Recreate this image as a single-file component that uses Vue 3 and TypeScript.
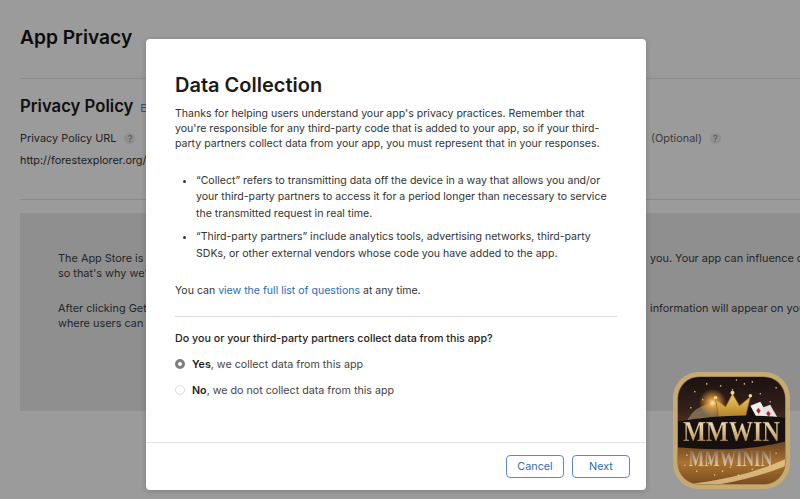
<script setup lang="ts">
const bullets: string[] = [
  '“Collect” refers to transmitting data off the device in a way that allows you and/or your third-party partners to access it for a period longer than necessary to service the transmitted request in real time.',
  '“Third-party partners” include analytics tools, advertising networks, third-party SDKs, or other external vendors whose code you have added to the app.',
]
const sparks: number[][] = [
  [22, 20], [34, 12], [48, 14], [60, 18], [72, 12], [88, 22], [98, 30], [18, 36], [30, 28], [104, 16], [80, 10], [64, 8],
  [14, 84], [24, 100], [36, 92], [50, 100], [66, 104], [80, 98], [96, 90], [104, 82], [42, 104], [12, 94], [58, 96],
]
</script>

<template>
  <div class="page">
    <h1 class="title">App Privacy</h1>
    <section class="policy">
      <div class="policy-head">
        <h2>Privacy Policy</h2>
        <a class="edit">Edit</a>
      </div>
      <div class="fields">
        <div class="field">
          <div class="label">Privacy Policy URL <span class="help">?</span></div>
          <div class="value">http://forestexplorer.org/privacy</div>
        </div>
        <div class="field optional">
          <div class="label">(Optional) <span class="help">?</span></div>
        </div>
      </div>
    </section>
    <section class="panel">
      <p class="panel-line"><span>The App Store is changing</span><span>you. Your app can influence customers</span></p>
      <p class="panel-line second"><span>so that's why we're asking</span></p>
      <p class="panel-line"><span>After clicking Get Started</span><span>information will appear on your</span></p>
      <p class="panel-line second"><span>where users can see it</span></p>
    </section>

    <div class="modal">
      <div class="modal-body">
        <h2 class="modal-title">Data Collection</h2>
        <p class="intro">Thanks for helping users understand your app's privacy practices. Remember that you're responsible for any third-party code that is added to your app, so if your third-party partners collect data from your app, you must represent that in your responses.</p>
        <ul class="bullets">
          <li v-for="b in bullets" :key="b">{{ b }}</li>
        </ul>
        <p class="full-list">You can <a>view the full list of questions</a> at any time.</p>
        <div class="rule"></div>
        <p class="question">Do you or your third-party partners collect data from this app?</p>
        <div class="radio-row"><span class="radio on"></span><span><b>Yes</b>, we collect data from this app</span></div>
        <div class="radio-row"><span class="radio"></span><span><b>No</b>, we do not collect data from this app</span></div>
      </div>
      <div class="modal-foot">
        <button class="btn">Cancel</button>
        <button class="btn">Next</button>
      </div>
    </div>

    <svg class="badge" viewBox="0 0 118 118" width="117" height="117">
      <defs>
        <linearGradient id="bg" x1="0" y1="0" x2="0" y2="1">
          <stop offset="0" stop-color="#1b1210" />
          <stop offset="0.3" stop-color="#33201a" />
          <stop offset="0.62" stop-color="#6f4420" />
          <stop offset="0.8" stop-color="#a97332" />
          <stop offset="1" stop-color="#7b4c1e" />
        </linearGradient>
        <linearGradient id="gold" x1="0" y1="0" x2="0" y2="1">
          <stop offset="0" stop-color="#fbf0d4" />
          <stop offset="0.5" stop-color="#dcc08a" />
          <stop offset="1" stop-color="#a07c46" />
        </linearGradient>
        <linearGradient id="silver" x1="0" y1="0" x2="0" y2="1">
          <stop offset="0" stop-color="#4a3528" />
          <stop offset="0.45" stop-color="#b79f84" />
          <stop offset="1" stop-color="#efe0c4" />
        </linearGradient>
        <linearGradient id="crown" x1="0" y1="0" x2="0" y2="1">
          <stop offset="0" stop-color="#f0cd6a" />
          <stop offset="1" stop-color="#b07f22" />
        </linearGradient>
        <radialGradient id="glow" cx="0.5" cy="0.5" r="0.5">
          <stop offset="0" stop-color="#fff4cc" />
          <stop offset="0.3" stop-color="#f2a73f" stop-opacity="0.85" />
          <stop offset="1" stop-color="#f0a238" stop-opacity="0" />
        </radialGradient>
        <clipPath id="inner"><rect x="5" y="5" width="108" height="108" rx="22" /></clipPath>
      </defs>
      <rect x="0" y="0" width="118" height="118" rx="26" fill="#c6aa72" />
      <rect x="4.500" y="4.500" width="109" height="109" rx="22" fill="#8a6a3a" />
      <rect x="5" y="5" width="108" height="108" rx="22" fill="url(#bg)" />
      <g clip-path="url(#inner)">
        <circle v-for="(s, i) in sparks" :key="i" :cx="s[0]" :cy="s[1]" r="0.8" fill="#f0c274" />
        <path d="M14 50 Q20 34 44 30 L56 44 L14 54 Z" fill="#8b7a5c" opacity="0.8" />
        <circle cx="40" cy="31" r="14" fill="url(#glow)" />
        <path d="M68 46 L76 32 L86 36 L86 48 Z" fill="#15100f" />
        <path d="M78 34 L88 30 L96 44 L86 49 Z" fill="#f4eeec" />
        <path d="M90 36 L98 33 L106 47 L94 50 Z" fill="#e8e1de" />
        <path d="M86 36 l2.500 3 l-2 3.200 l-2.500 -3 Z M96 39 l2.500 3 l-2 3.200 l-2.500 -3 Z" fill="#b32433" />
        <path d="M46 46 L43 27 L53 35 L60 22 L67 34 L78 25 L73 46 Z" fill="url(#crown)" stroke="#8f6417" stroke-width="0.7" />
        <circle cx="43" cy="26" r="1.800" fill="#f6da85" />
        <circle cx="60" cy="21" r="2" fill="#f6da85" />
        <circle cx="78" cy="24" r="1.800" fill="#f6da85" />
        <path d="M5 50 Q60 40 113 46 L113 70 Q70 82 5 76 Z" fill="#171010" />
        <path d="M8 114 Q70 108 113 88 L113 95 Q70 112 24 116 Z" fill="#f6dc9e" opacity="0.7" />
        <text x="59" y="70" text-anchor="middle" class="logo-main" fill="url(#gold)" stroke="#3a2510" stroke-width="0.3" textLength="98" lengthAdjust="spacingAndGlyphs">MMWIN</text>
        <text x="58" y="95" text-anchor="middle" class="logo-sub" fill="url(#silver)" textLength="84" lengthAdjust="spacingAndGlyphs">MMWININ</text>
      </g>
    </svg>
  </div>
</template>

<style>
html, body { margin: 0; padding: 0; background: #9b9b9b; }
</style>

<style scoped>
.page {
  position: relative;
  width: 800px;
  height: 499px;
  overflow: hidden;
  box-sizing: border-box;
  padding: 25px 0 0 20px;
  background: #9b9b9b;
  color: #111;
  font-family: Inter, "Liberation Sans", sans-serif;
  font-size: 10.9px;
}
.title {
  margin: 0;
  font-size: 19.2px;
  line-height: 24px;
  font-weight: 600;
  color: #0c0c0c;
}
.policy {
  margin-top: 29px;
  border-top: 1px solid #8a8a8a;
  height: 122px;
  box-sizing: border-box;
  padding-top: 16px;
  border-bottom: 1px solid #8a8a8a;
}
.policy-head { display: flex; align-items: baseline; gap: 7px; }
.policy-head h2 { margin: 0; font-size: 16.7px; line-height: 22px; font-weight: 600; color: #0f0f0f; }
.edit { color: #30527f; font-size: 11px; }
.fields { display: flex; margin-top: 14px; }
.field { flex: none; width: 631px; }
.label { color: #222; line-height: 15px; }
.optional .label { color: #3c3c3c; }
.help {
  display: inline-block;
  width: 11px;
  height: 11px;
  margin-left: 5px;
  border-radius: 50%;
  background: #8f8f8f;
  color: #555;
  text-align: center;
  font-size: 9px;
  line-height: 11px;
}
.value { margin-top: 7px; line-height: 15px; color: #1c1c1c; }
.panel {
  margin-top: 13px;
  height: 198px;
  box-sizing: border-box;
  padding: 38px 0 0 38px;
  background: #8f8f8f;
}
.panel-line {
  display: flex;
  justify-content: space-between;
  margin: 0;
  line-height: 15px;
  white-space: nowrap;
  color: #262626;
}
.panel-line span:nth-child(2) { width: 150px; overflow: hidden; }
.panel-line.second { margin-bottom: 20px; }
.modal {
  position: absolute;
  left: 146px;
  top: 39px;
  width: 500px;
  height: 451px;
  display: flex;
  flex-direction: column;
  background: #fff;
  border-radius: 4px;
  box-shadow: 0 1px 6px rgba(0, 0, 0, 0.18);
  color: #333;
  font-size: 10.55px;
}
.modal-body { flex: 1; padding: 33px 29px 0; }
.modal-title {
  margin: 0;
  font-size: 20px;
  line-height: 26px;
  font-weight: 600;
  color: #1a1a1a;
}
.intro { margin: 8px 0 0; line-height: 15px; color: #333; }
.bullets { margin: 21.5px 0 0; padding: 0 0 0 21px; line-height: 16.6px; }
.bullets li + li { margin-top: 7px; }
.full-list { margin: 21px 0 0; line-height: 16px; }
.full-list a { color: #2b6cb5; }
.rule { margin-top: 17px; height: 1px; background: #dcdcdc; }
.question { margin: 14px 0 0; line-height: 16px; color: #222; font-weight: 500; font-size: 10.7px; }
.radio-row { display: flex; align-items: center; gap: 7px; height: 26px; color: #444; font-size: 10.7px; }
.question + .radio-row { margin-top: 4px; }
.radio-row b { font-weight: 600; color: #222; }
.radio {
  width: 10px;
  height: 10px;
  box-sizing: border-box;
  border: 1px solid #dadada;
  border-radius: 50%;
  background: #fff;
}
.radio.on { border: 3px solid #808080; }
.modal-foot {
  height: 48px;
  box-sizing: border-box;
  padding: 12px 16px 0 0;
  border-top: 1px solid #e2e2e2;
  display: flex;
  justify-content: flex-end;
  gap: 8px;
}
.btn {
  width: 58px;
  height: 23px;
  padding: 0;
  border: 1px solid #5b8ac4;
  border-radius: 4px;
  background: #fff;
  color: #2f69aa;
  font-family: inherit;
  font-size: 10.8px;
}
.badge {
  position: absolute;
  left: 673px;
  top: 372px;
  filter: blur(0.4px);
}
.logo-main {
  font-family: "Liberation Serif", serif;
  font-weight: 700;
  font-size: 30px;
}
.logo-sub {
  font-family: "Liberation Serif", serif;
  font-weight: 700;
  font-size: 24px;
}
</style>
